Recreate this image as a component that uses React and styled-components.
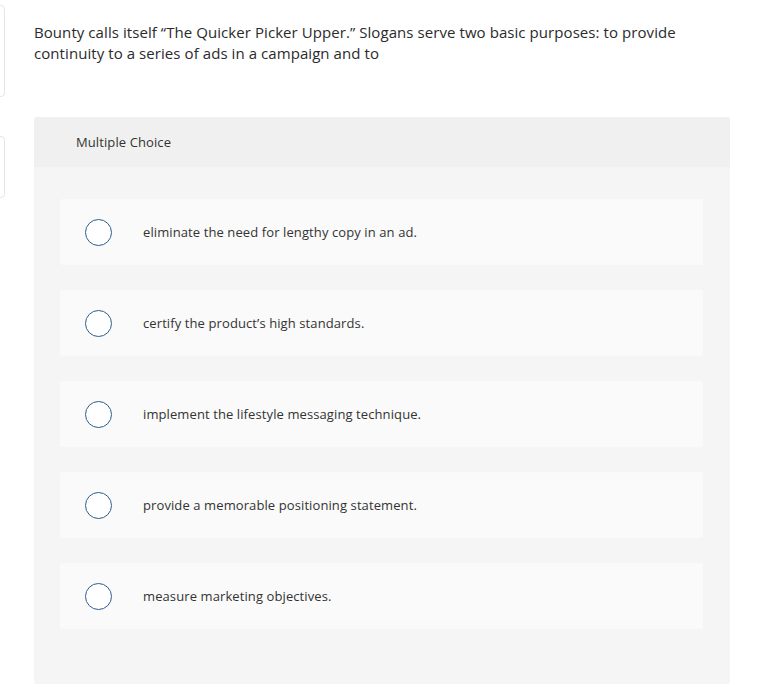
import React from "react";
import styled, { createGlobalStyle } from "styled-components";

const GlobalStyle = createGlobalStyle`
  html, body {
    margin: 0;
    padding: 0;
    background: #fff;
  }
  body {
    font-family: "Open Sans", "Lato", Arial, sans-serif;
    color: #333;
  }
`;

const options = [
  "eliminate the need for lengthy copy in an ad.",
  "certify the product’s high standards.",
  "implement the lifestyle messaging technique.",
  "provide a memorable positioning statement.",
  "measure marketing objectives."
];

export default function App() {
  return (
    <Page>
      <GlobalStyle />
      <Rail>
        <RailCard height={92} />
        <RailCard height={62} />
      </Rail>
      <Main>
        <Prompt>
          Bounty calls itself “The Quicker Picker Upper.” Slogans serve two
          basic purposes: to provide continuity to a series of ads in a
          campaign and to
        </Prompt>
        <Panel>
          <PanelHeader>Multiple Choice</PanelHeader>
          <Choices>
            {options.map(text => (
              <Choice key={text}>
                <Radio />
                <ChoiceText>{text}</ChoiceText>
              </Choice>
            ))}
          </Choices>
        </Panel>
      </Main>
    </Page>
  );
}

const Page = styled.div`
  display: flex;
  width: 764px;
  height: 687px;
  overflow: hidden;
`;

const Rail = styled.div`
  width: 6px;
  flex: none;
  display: flex;
  flex-direction: column;
  gap: 39px;
  padding-top: 5px;
`;

const RailCard = styled.div`
  height: ${p => p.height}px;
  margin-left: -20px;
  width: 25px;
  border: 1px solid #e6e6e6;
  border-radius: 4px;
  box-sizing: border-box;
`;

const Main = styled.div`
  flex: none;
  width: 696px;
  margin-left: 28px;
  padding-top: 22px;
`;

const Prompt = styled.p`
  margin: 0;
  font-size: 15px;
  letter-spacing: 0.07px;
  line-height: 21px;
  color: #2b2b2b;
  max-width: 660px;
`;

const Panel = styled.div`
  margin-top: 53px;
  background: #f5f5f5;
  border-radius: 3px;
  height: 567px;
`;

const PanelHeader = styled.div`
  height: 50px;
  background: #f0f0f0;
  border-radius: 3px 3px 0 0;
  display: flex;
  align-items: center;
  padding-left: 42px;
  font-size: 13px;
  letter-spacing: 0.1px;
  color: #333;
`;

const Choices = styled.div`
  display: flex;
  flex-direction: column;
  gap: 25px;
  padding: 32px 27px 0 26px;
`;

const Choice = styled.div`
  height: 66px;
  background: #fafafa;
  border-radius: 3px;
  display: flex;
  align-items: center;
  padding-left: 25px;
`;

const Radio = styled.span`
  width: 27px;
  height: 27px;
  box-sizing: border-box;
  border: 1.5px solid #2e5d8c;
  border-radius: 50%;
  background: #fff;
  flex: none;
`;

const ChoiceText = styled.span`
  margin-left: 31px;
  font-size: 13px;
  letter-spacing: 0.1px;
  color: #333;
`;
